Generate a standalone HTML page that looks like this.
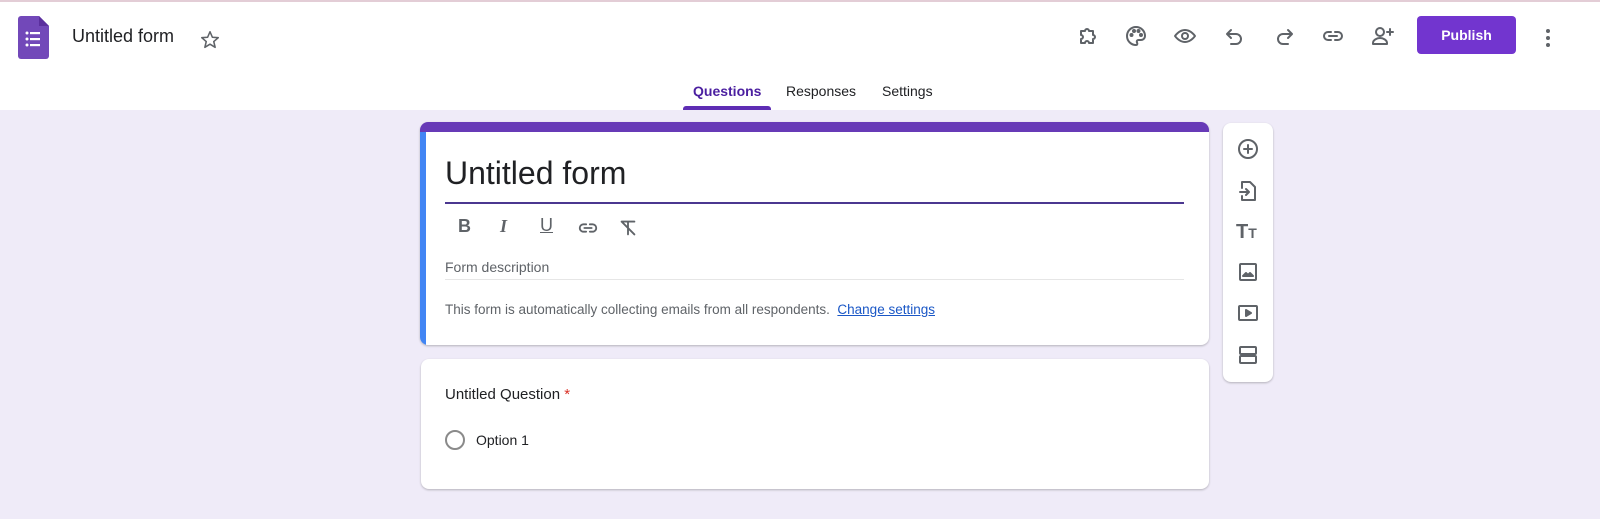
<!DOCTYPE html>
<html><head><style>
*{margin:0;padding:0;box-sizing:border-box}
body{width:1600px;height:519px;overflow:hidden;background:#efebf8;font-family:"Liberation Sans",Arial,sans-serif;position:relative;color:#202124}
.hdr{position:absolute;left:0;top:0;width:1600px;height:110px;background:#fff;border-top:2px solid #e3cdd6}
.abs{position:absolute}
.ic{position:absolute;fill:none;stroke:#5f6368;stroke-width:2;stroke-linecap:round;stroke-linejoin:round}
.card{position:absolute;background:#fff;border-radius:8px;box-shadow:0 1px 2px rgba(0,0,0,.25)}
</style></head><body>
<div class="hdr">
<svg class="abs" style="left:18px;top:14px" width="31" height="43" viewBox="0 0 31 43"><path d="M3 0H21L31 10V40a3 3 0 0 1-3 3H3a3 3 0 0 1-3-3V3a3 3 0 0 1 3-3z" fill="#7248b9"/><path d="M21 0L31 10H21z" fill="#5b2f9e"/><g fill="#fff"><circle cx="9" cy="17" r="1.5"/><circle cx="9" cy="23" r="1.5"/><circle cx="9" cy="29" r="1.5"/><rect x="12" y="16" width="10" height="2.2"/><rect x="12" y="22" width="10" height="2.2"/><rect x="12" y="28" width="10" height="2.2"/></g></svg>
<div class="abs" style="left:72px;top:24px;font-size:18px;color:#202124">Untitled form</div>
<svg class="abs" style="left:199px;top:27px" width="22" height="22" viewBox="0 0 24 24"><path d="M12 3l2.6 6 6.4.5-4.9 4.2 1.5 6.3L12 16.6 6.4 20l1.5-6.3L3 9.5 9.4 9z" fill="none" stroke="#5f6368" stroke-width="1.7" stroke-linejoin="round"/></svg>
<svg class="ic" style="left:1076px;top:22px" width="24" height="24" viewBox="0 0 24 24"><path d="M5 7h4a2 2 0 1 1 4 0h4v4a2 2 0 1 1 0 4v4h-4a2 2 0 1 0-4 0H5v-4a2 2 0 1 0 0-4z"/></svg>
<svg class="ic" style="left:1124px;top:22px" width="24" height="24" viewBox="0 0 24 24"><path d="M12 3a9 9 0 0 0 0 18c1.5 0 1.5-1.5 1-2.5s0-2.5 1.5-2.5H17a4 4 0 0 0 4-4c0-5-4-9-9-9z"/><circle cx="7.5" cy="11" r="1" fill="#5f6368"/><circle cx="10" cy="7" r="1" fill="#5f6368"/><circle cx="14.5" cy="7" r="1" fill="#5f6368"/><circle cx="17" cy="11" r="1" fill="#5f6368"/></svg>
<svg class="ic" style="left:1173px;top:22px" width="24" height="24" viewBox="0 0 24 24"><path d="M2 12s4-6 10-6 10 6 10 6-4 6-10 6S2 12 2 12z"/><circle cx="12" cy="12" r="3"/></svg>
<svg class="ic" style="left:1223px;top:22px" width="24" height="24" viewBox="0 0 24 24"><path d="M8 6L4 10l4 4M4 10h9a5 5 0 0 1 0 10H8"/></svg>
<svg class="ic" style="left:1272px;top:22px" width="24" height="24" viewBox="0 0 24 24"><path d="M16 6l4 4-4 4M20 10h-9a5 5 0 0 0 0 10h5"/></svg>
<svg class="ic" style="left:1321px;top:22px" width="24" height="24" viewBox="0 0 24 24"><path d="M10 8H7a4 4 0 0 0 0 8h3M14 8h3a4 4 0 0 1 0 8h-3M8 12h8"/></svg>
<svg class="ic" style="left:1370px;top:22px" width="26" height="24" viewBox="0 0 26 24"><circle cx="10" cy="8" r="4"/><path d="M3 20v-1c0-3 4-5 7-5s7 2 7 5v1zM20 5v6M17 8h6"/></svg>
<div class="abs" style="left:1417px;top:14px;width:99px;height:38px;background:#7235cf;border-radius:4px;color:#fff;font-size:14px;font-weight:bold;text-align:center;line-height:38px">Publish</div>
<svg class="abs" style="left:1544px;top:26px" width="8" height="20" viewBox="0 0 8 20"><circle cx="4" cy="3" r="2" fill="#5f6368"/><circle cx="4" cy="10" r="2" fill="#5f6368"/><circle cx="4" cy="17" r="2" fill="#5f6368"/></svg>
<div class="abs" style="left:693px;top:81px;font-size:14px;color:#4b1fa0;font-weight:bold">Questions</div>
<div class="abs" style="left:683px;top:104px;width:88px;height:4px;background:#5e2db4;border-radius:3px 3px 0 0"></div>
<div class="abs" style="left:786px;top:81px;font-size:14px;color:#202124">Responses</div>
<div class="abs" style="left:882px;top:81px;font-size:14px;color:#202124">Settings</div>
</div>

<div class="card" style="left:420px;top:122px;width:789px;height:223px;overflow:hidden">
<div class="abs" style="left:0;top:0;width:789px;height:10px;background:#673ab7"></div>
<div class="abs" style="left:0;top:10px;width:6px;height:213px;background:#4285f4"></div>
<div class="abs" style="left:25px;top:33px;font-size:32px;color:#202124">Untitled form</div>
<div class="abs" style="left:25px;top:80px;width:739px;height:2px;background:#4b3790"></div>
<div class="abs" style="left:38px;top:94px;font-size:18px;font-weight:bold;color:#5f6368">B</div>
<div class="abs" style="left:80px;top:94px;font-size:18px;font-style:italic;font-weight:bold;color:#5f6368;font-family:'Liberation Serif',serif">I</div>
<div class="abs" style="left:120px;top:93px;font-size:18px;color:#5f6368;text-decoration:underline">U</div>
<svg class="ic" style="left:157px;top:95px" width="22" height="22" viewBox="0 0 24 24"><path d="M10 8H7a4 4 0 0 0 0 8h3M14 8h3a4 4 0 0 1 0 8h-3M8 12h8"/></svg>
<svg class="ic" style="left:197px;top:95px" width="22" height="22" viewBox="0 0 24 24"><path d="M5 5h14M12 5v14M5 5l14 14"/></svg>
<div class="abs" style="left:25px;top:137px;font-size:14px;color:#5f6368">Form description</div>
<div class="abs" style="left:25px;top:157px;width:739px;height:1px;background:#e6e6e6"></div>
<div class="abs" style="left:25px;top:180px;font-size:13.5px;color:#5f6368">This form is automatically collecting emails from all respondents.&nbsp; <span style="color:#1a57c6;text-decoration:underline">Change settings</span></div>
</div>

<div class="card" style="left:421px;top:359px;width:788px;height:130px">
<div class="abs" style="left:24px;top:27px;font-size:15px;color:#202124">Untitled Question <span style="color:#d93025">*</span></div>
<div class="abs" style="left:24px;top:71px;width:20px;height:20px;border:2px solid #8a8a8a;border-radius:50%"></div>
<div class="abs" style="left:55px;top:73px;font-size:14px;color:#202124">Option 1</div>
</div>

<div class="card" style="left:1223px;top:123px;width:50px;height:259px">
<svg class="ic" style="left:13px;top:14px" width="24" height="24" viewBox="0 0 24 24"><circle cx="12" cy="12" r="9"/><path d="M12 8v8M8 12h8"/></svg>
<svg class="ic" style="left:13px;top:56px" width="24" height="24" viewBox="0 0 24 24"><path d="M6 9V3h8l5 5v13H6v-4M4 13h9M10 10l3 3-3 3"/></svg>
<div class="abs" style="left:13px;top:99px;font-weight:bold;color:#5f6368;font-size:20px;line-height:20px">T<span style="font-size:14px">T</span></div>
<svg class="ic" style="left:13px;top:137px" width="24" height="24" viewBox="0 0 24 24"><rect x="4" y="4" width="16" height="16" rx="1"/><path d="M7 16l3-3 2 2 2-2 3 3z" fill="#5f6368"/></svg>
<svg class="ic" style="left:13px;top:178px" width="24" height="24" viewBox="0 0 24 24"><rect x="3" y="5" width="18" height="14" rx="1"/><path d="M10 9v6l5-3z" fill="#5f6368"/></svg>
<svg class="ic" style="left:13px;top:220px" width="24" height="24" viewBox="0 0 24 24"><rect x="4" y="4" width="16" height="7" rx="1"/><rect x="4" y="13" width="16" height="7" rx="1"/></svg>
</div>
</body></html>
